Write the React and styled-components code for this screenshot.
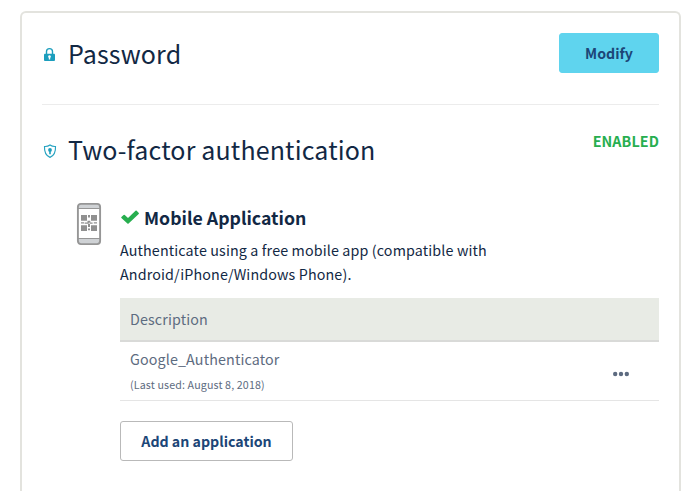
import React from "react";
import styled, { createGlobalStyle } from "styled-components";

const GlobalStyle = createGlobalStyle`
  * { box-sizing: border-box; }
  body {
    margin: 0;
    background: #fff;
    color: #122844;
    font-family: "Noto Sans CJK SC", "Noto Sans", sans-serif;
  }
`;

const Page = styled.div`
  padding-top: 11px;
`;

const Card = styled.main`
  margin: 0 19px 0 20px;
  height: 480px;
  border: 2px solid #e3e3de;
  border-bottom: 0;
  border-radius: 6px 6px 0 0;
  padding: 20px 20px 0;
`;

const Section = styled.section`
  display: flex;
  align-items: flex-start;
  justify-content: space-between;
  height: ${(p) => p.$height}px;
  border-bottom: ${(p) => (p.$divided ? "1px solid #ececec" : "0")};
`;

const Heading = styled.div`
  display: flex;
  align-items: center;
  height: 44px;
  margin-top: ${(p) => p.$offset || 0}px;
`;

const HeadingIcon = styled.svg`
  width: 14px;
  height: 16px;
  margin: 0 11px 0 1px;
  flex: none;
`;

const Title = styled.h2`
  margin: 0;
  padding-bottom: 4px;
  font-size: 25px;
  font-weight: 400;
  line-height: 40px;
  letter-spacing: 0.15px;
  white-space: nowrap;
`;

const Button = styled.button`
  height: 40px;
  width: ${(p) => p.$width}px;
  padding: 0;
  border: 1px solid ${(p) => (p.$primary ? "#5fd4ee" : "#b9b9b9")};
  border-radius: 3px;
  background: ${(p) => (p.$primary ? "#5fd4ee" : "#fff")};
  color: #1c4677;
  font: 700 14.2px/38px "Noto Sans CJK SC", sans-serif;
  white-space: nowrap;
`;

const Status = styled.span`
  margin-top: 24px;
  font-size: 14.3px;
  font-weight: 700;
  line-height: 24px;
  letter-spacing: 0.1px;
  color: #27ae4f;
`;

const Method = styled.section`
  display: flex;
  padding-left: 34px;
`;

const PhoneIcon = styled.svg`
  width: 26px;
  height: 44px;
  margin: 1px 18px 0 0;
  flex: none;
`;

const MethodBody = styled.div`
  flex: 1;
`;

const MethodTitle = styled.h3`
  display: flex;
  align-items: center;
  margin: 0;
  height: 32px;
  font-size: 17.7px;
  font-weight: 700;
  line-height: 32px;
`;

const Check = styled.svg`
  width: 20px;
  height: 16px;
  margin-right: 4px;
`;

const Description = styled.p`
  margin: 5px 0 12px;
  font-size: 14.3px;
  line-height: 24px;
  letter-spacing: 0.13px;
`;

const Table = styled.div`
  color: #5d6b80;
  font-size: 14.3px;
  letter-spacing: 0.13px;
`;

const HeadRow = styled.div`
  height: 44px;
  padding-left: 10px;
  background: #e8ebe5;
  border-bottom: 2px solid #d9dad8;
  line-height: 42px;
`;

const Row = styled.div`
  display: flex;
  justify-content: space-between;
  height: 59px;
  padding: 5px 29px 0 10px;
  border-bottom: 1px solid #e5e5e5;
`;

const AppName = styled.div`
  line-height: 24px;
`;

const LastUsed = styled.div`
  font-size: 10.7px;
  line-height: 27px;
`;

const More = styled.svg`
  width: 18px;
  height: 6px;
  margin-top: 24px;
`;

const Actions = styled.div`
  margin-top: 20px;
`;

const LockIcon = () => (
  <HeadingIcon viewBox="0 0 14 16">
    <path d="M3.5 7V4.6a3 3 0 0 1 6 0V7" fill="none" stroke="#1c9ebd" strokeWidth="1.4" />
    <rect x="1" y="6.8" width="11" height="7.2" rx="0.9" fill="#1c9ebd" />
    <path d="M6.5 8.2a1.4 1.4 0 0 1 .7 2.6v1.7H5.8v-1.7a1.4 1.4 0 0 1 .7-2.6z" fill="#fff" />
  </HeadingIcon>
);

const ShieldIcon = () => (
  <HeadingIcon viewBox="0 0 14 16">
    <path
      d="M7 2C5.4 3.2 3.4 3.6 1.5 3.5C1.2 8.9 2.8 12.6 7 14.4C11.2 12.6 12.8 8.9 12.5 3.5C10.6 3.6 8.6 3.2 7 2z"
      fill="none"
      stroke="#27a3c1"
      strokeWidth="1.15"
    />
    <circle cx="7" cy="6.9" r="1.9" fill="#1c9ebd" />
    <path d="M6.2 6.8h1.6v4.5H6.2z" fill="#1c9ebd" />
  </HeadingIcon>
);

const Phone = () => (
  <PhoneIcon viewBox="0 0 26 44">
    <rect x="1.9" y="1.9" width="22.2" height="40.2" rx="3" fill="#cfd2d5" />
    <rect x="1.9" y="7" width="22.2" height="29.5" fill="#fff" />
    <path d="M1.9 6.5h22.2M1.9 36.5h22.2" stroke="#969696" strokeWidth="1.2" />
    <rect x="1.9" y="1.9" width="22.2" height="40.2" rx="3" fill="none" stroke="#969696" strokeWidth="1.9" />
    <path
      d="M5 13h6v5.8H5zM12 13h2v2.6h-2zM15 13h6v5.8h-6zM5 23.2h6V29H5zM15 23.2h6V29h-6zM12 22h2v3h-2zM12 26.4h2v1.8h-2zM5 20.2h3v1.2H5zM8.6 20.5h4.2v1.3H8.6zM11.5 18.8h2.8v1.6h-2.8zM13.6 20.6h3v1.2h-3zM17.8 20.2H21v1.3h-3.2z"
      fill="#909090"
    />
  </PhoneIcon>
);

export default function App() {
  return (
    <Page>
      <GlobalStyle />
      <Card>
        <Section $height={72} $divided>
          <Heading>
            <LockIcon />
            <Title>Password</Title>
          </Heading>
          <Button $primary $width={100}>Modify</Button>
        </Section>
        <Section $height={96}>
          <Heading $offset={24}>
            <ShieldIcon />
            <Title>Two-factor authentication</Title>
          </Heading>
          <Status>ENABLED</Status>
        </Section>
        <Method>
          <Phone />
          <MethodBody>
            <MethodTitle>
              <Check viewBox="0 0 20 16">
                <path
                  d="M1.4 8.1L3.6 5.9Q4.2 5.4 4.8 6L8 9L15.5 1.8Q16.1 1.3 16.7 1.8L18.8 3.9Q19.2 4.4 18.7 4.9L8.6 14.6Q8 15.1 7.4 14.6L1.4 9.1Q.9 8.6 1.4 8.1Z"
                  fill="#27ae4f"
                />
              </Check>
              Mobile Application
            </MethodTitle>
            <Description>
              Authenticate using a free mobile app (compatible with
              <br />
              Android/iPhone/Windows Phone).
            </Description>
            <Table>
              <HeadRow>Description</HeadRow>
              <Row>
                <div>
                  <AppName>Google_Authenticator</AppName>
                  <LastUsed>(Last used: August 8, 2018)</LastUsed>
                </div>
                <More viewBox="0 0 18 6" fill="#5d6b80">
                  <circle cx="3.2" cy="3" r="2.2" />
                  <circle cx="9" cy="3" r="2.2" />
                  <circle cx="14.8" cy="3" r="2.2" />
                </More>
              </Row>
            </Table>
            <Actions>
              <Button $width={173}>Add an application</Button>
            </Actions>
          </MethodBody>
        </Method>
      </Card>
    </Page>
  );
}
